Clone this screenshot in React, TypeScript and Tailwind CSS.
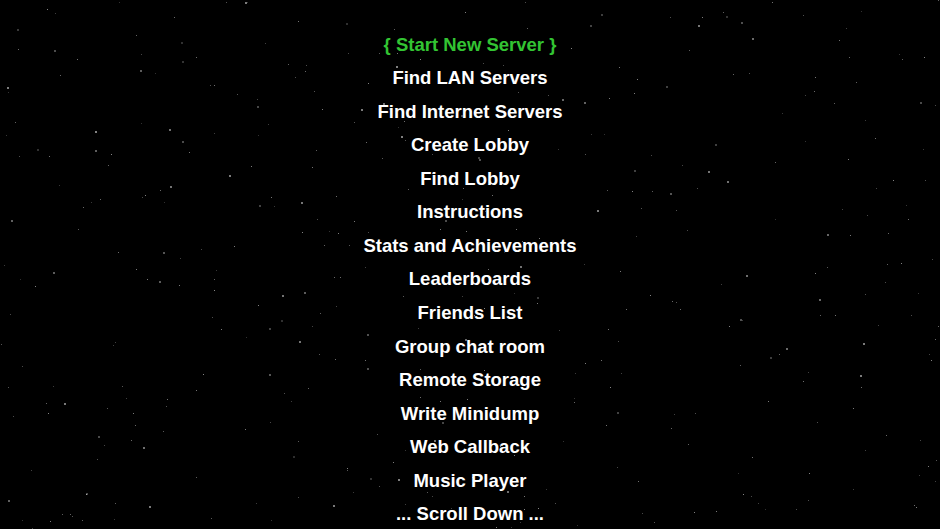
import React from "react";

const items = [
  "Find LAN Servers",
  "Find Internet Servers",
  "Create Lobby",
  "Find Lobby",
  "Instructions",
  "Stats and Achievements",
  "Leaderboards",
  "Friends List",
  "Group chat room",
  "Remote Storage",
  "Write Minidump",
  "Web Callback",
  "Music Player",
  "... Scroll Down ...",
];

function makeStars() {
  let s = 1234567;
  const rand = () => {
    s = (s * 1103515245 + 12345) % 2147483648;
    return s / 2147483648;
  };
  const stars: { x: number; y: number; o: number; r: number }[] = [];
  for (let i = 0; i < 420; i++) {
    const x = Math.floor(rand() * 940);
    const y = Math.floor(rand() * 529);
    const o = 0.18 + rand() * 0.35;
    const r = rand() < 0.2 ? 2 : 1;
    stars.push({ x, y, o, r });
  }
  return stars;
}

const stars = makeStars();

export default function App() {
  return (
    <div className="relative w-[940px] h-[529px] bg-black overflow-hidden">
      <svg className="absolute inset-0" width="940" height="529" viewBox="0 0 940 529">
        {stars.map((st, i) => (
          <rect key={i} x={st.x} y={st.y} width={st.r} height={st.r} fill="#ffffff" fillOpacity={st.o} />
        ))}
      </svg>
      <div
        className="relative flex flex-col items-center pt-[27.5px] text-[18.5px] leading-[33.57px] font-bold text-white"
        style={{ fontFamily: '"Liberation Sans", Arial, sans-serif' }}
      >
        <div className="text-[#33c433]">{"{ Start New Server }"}</div>
        {items.map((t) => (
          <div key={t}>{t}</div>
        ))}
      </div>
    </div>
  );
}
